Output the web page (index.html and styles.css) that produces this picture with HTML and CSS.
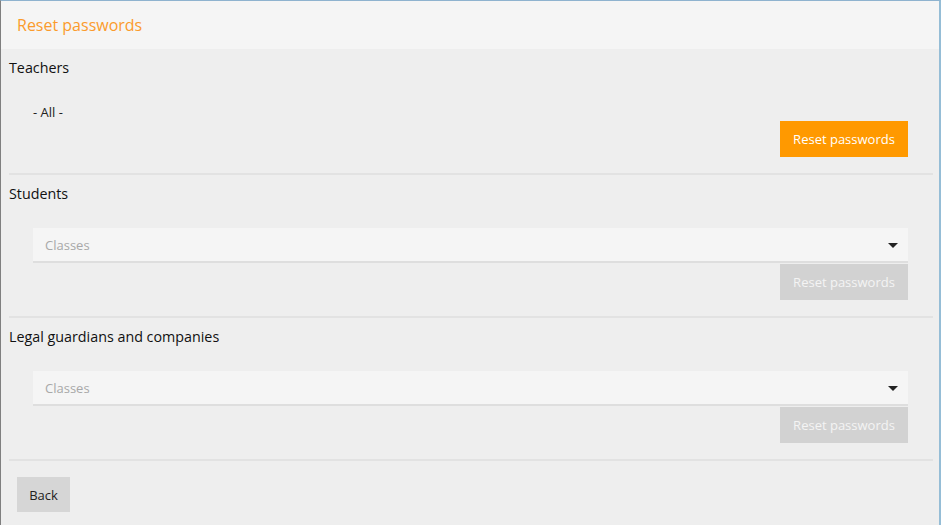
FILE: index.html
```html
<!DOCTYPE html>
<html lang="en">
<head>
<meta charset="utf-8">
<title>Reset passwords</title>
<link rel="stylesheet" href="styles.css">
</head>
<body>
<div class="frame">
  <header class="page-header">
    <h1 class="page-title">Reset passwords</h1>
  </header>
  <main class="content">
    <section class="group">
      <h2 class="group-label">Teachers</h2>
      <div class="all-row">- All -</div>
      <div class="actions">
        <button class="btn btn-primary" type="button">Reset passwords</button>
      </div>
    </section>
    <section class="group">
      <h2 class="group-label">Students</h2>
      <div class="select">
        <span class="select-placeholder">Classes</span>
        <span class="caret"></span>
      </div>
      <div class="actions">
        <button class="btn btn-disabled" type="button" disabled>Reset passwords</button>
      </div>
    </section>
    <section class="group">
      <h2 class="group-label">Legal guardians and companies</h2>
      <div class="select">
        <span class="select-placeholder">Classes</span>
        <span class="caret"></span>
      </div>
      <div class="actions">
        <button class="btn btn-disabled" type="button" disabled>Reset passwords</button>
      </div>
    </section>
    <div class="footer">
      <button class="btn btn-back" type="button">Back</button>
    </div>
  </main>
</div>
</body>
</html>
```

FILE: styles.css
```css
html, body {
  margin: 0;
  padding: 0;
  height: 100%;
}

body {
  font-family: "Open Sans", "Noto Sans", "Liberation Sans", sans-serif;
  font-size: 13px;
  color: #222;
  background: #eeeeee;
}

.frame {
  box-sizing: border-box;
  width: 941px;
  height: 525px;
  border-left: 1px solid #7f7f7f;
  border-top: 1px solid #8fb3cf;
  border-right: 2px solid #95bdd6;
  background: #eeeeee;
  display: flex;
  flex-direction: column;
}

.page-header {
  height: 48px;
  background: #f5f5f5;
  display: flex;
  align-items: center;
  padding-left: 16px;
}

.page-title {
  margin: 0;
  font-size: 16px;
  font-weight: normal;
  color: #fb9b2c;
}

.content {
  padding: 0 6px 0 8px;
}

.group {
  border-bottom: 2px solid #e2e2e2;
  padding: 9px 25px 16px 0;
}

.group-label {
  margin: 0;
  font-size: 14.3px;
  font-weight: normal;
  line-height: 20px;
  color: #111;
}

.all-row {
  margin-top: 25px;
  margin-left: 24px;
  line-height: 18px;
  font-size: 13px;
  color: #222;
}

.actions {
  display: flex;
  justify-content: flex-end;
}

.btn {
  font-family: inherit;
  font-size: 13px;
  border: none;
  height: 36px;
  padding: 0 12px;
  cursor: pointer;
}

.btn-primary {
  width: 128px;
  background: #ff9900;
  color: #fff;
}

.btn-disabled {
  width: 128px;
  background: #d2d2d2;
  color: #f4f4f4;
  cursor: default;
}

.select {
  margin-top: 24px;
  margin-left: 24px;
  height: 33px;
  background: #f5f5f5;
  border-bottom: 2px solid #dedede;
  display: flex;
  align-items: center;
  justify-content: space-between;
  padding: 0 10px 0 12px;
  margin-bottom: 1px;
}

.select-placeholder {
  color: #a8a8a8;
  font-size: 13px;
}

.caret {
  width: 0;
  height: 0;
  border-left: 5px solid transparent;
  border-right: 5px solid transparent;
  border-top: 5px solid #222;
  margin-top: 1px;
}

.footer {
  padding: 16px 0 0 8px;
}

.btn-back {
  height: 35px;
  width: 53px;
  padding: 0;
  background: #d6d6d6;
  color: #222;
}
```
